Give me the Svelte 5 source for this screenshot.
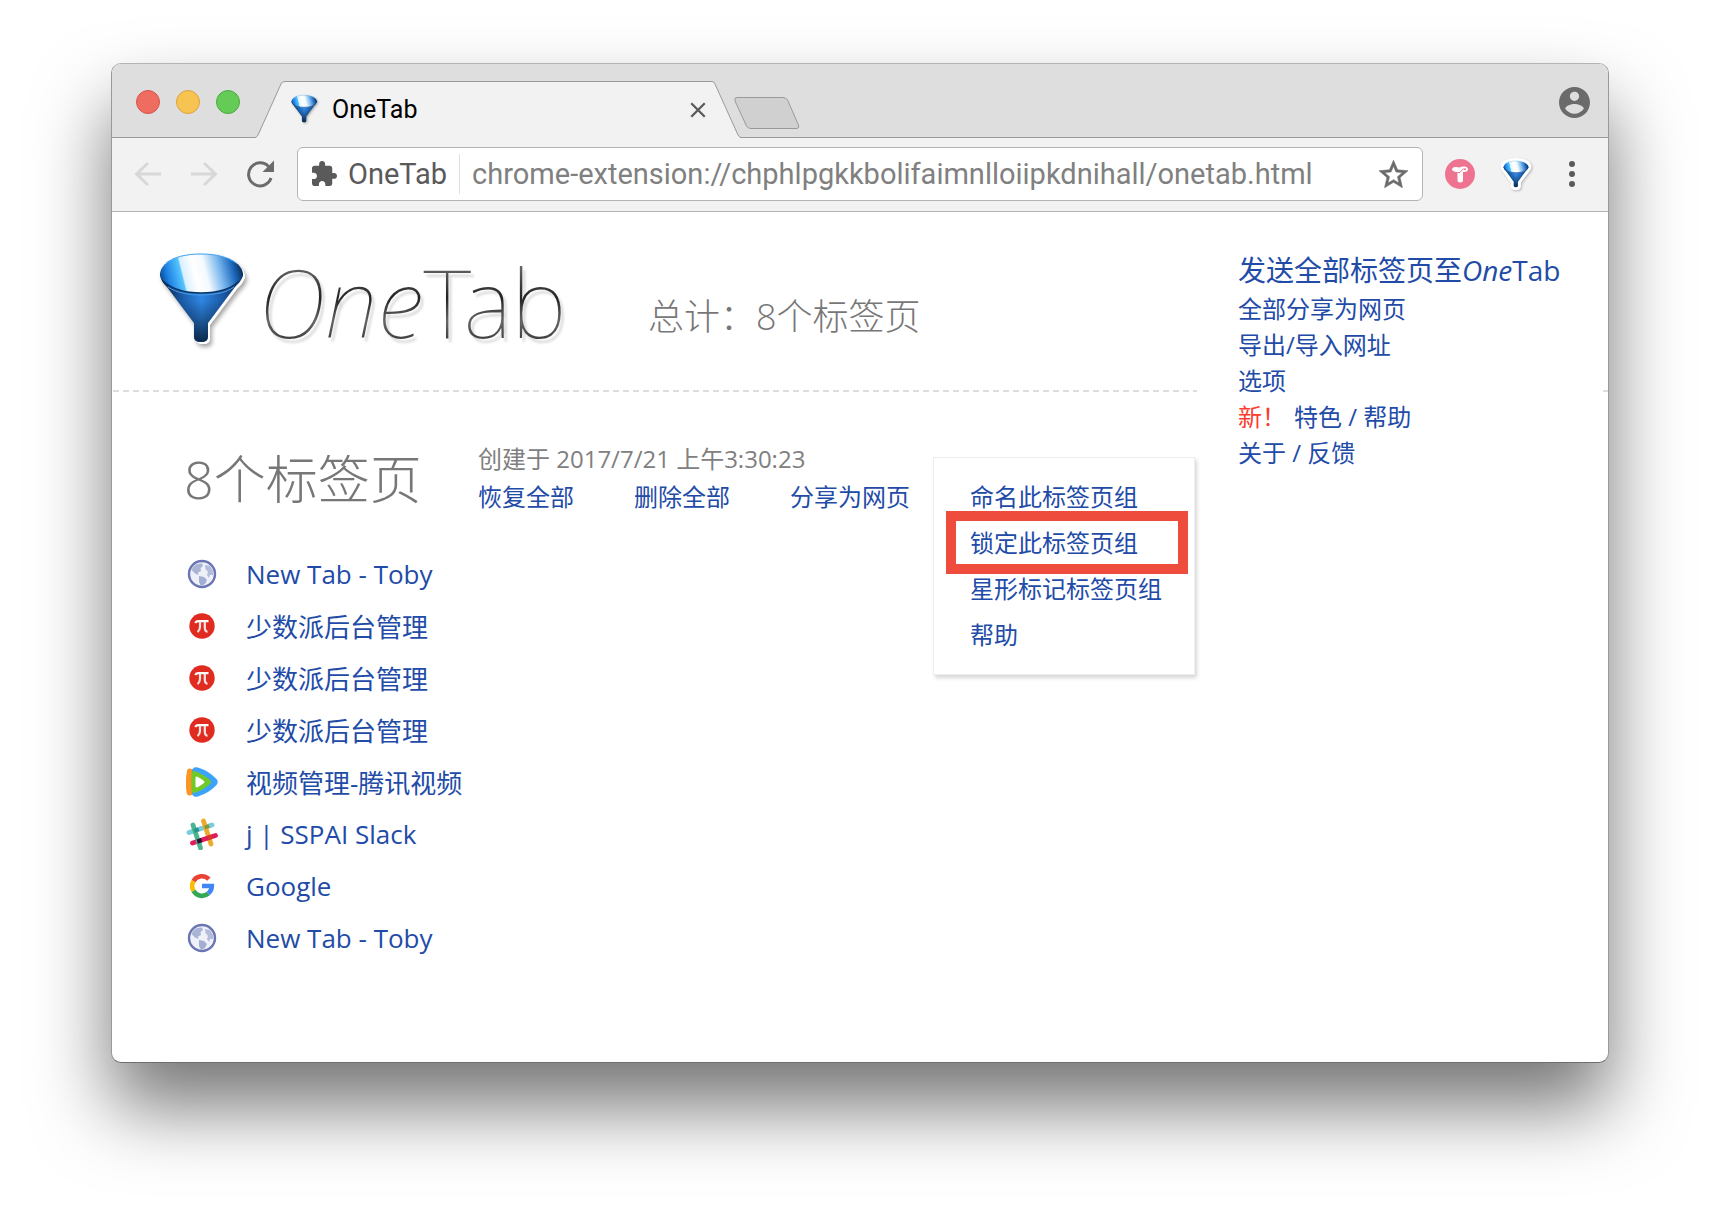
<script lang="ts">
  type Favicon = "globe" | "pi" | "video" | "slack" | "google";

  const tabs: { title: string; icon: Favicon }[] = [
    { title: "New Tab - Toby", icon: "globe" },
    { title: "少数派后台管理", icon: "pi" },
    { title: "少数派后台管理", icon: "pi" },
    { title: "少数派后台管理", icon: "pi" },
    { title: "视频管理-腾讯视频", icon: "video" },
    { title: "j | SSPAI Slack", icon: "slack" },
    { title: "Google", icon: "google" },
    { title: "New Tab - Toby", icon: "globe" },
  ];

  const groupActions = ["恢复全部", "删除全部", "分享为网页"];
  const menu = ["命名此标签页组", "锁定此标签页组", "星形标记标签页组", "帮助"];
  const highlighted = 1;

  let address = $state("chrome-extension://chphlpgkkbolifaimnlloiipkdnihall/onetab.html");
</script>

{#snippet funnel(id: string)}
  <defs>
    <linearGradient id="{id}-in" gradientUnits="userSpaceOnUse" x1="2" y1="28" x2="82" y2="8">
      <stop offset="0" stop-color="#0a4a94" />
      <stop offset="0.1" stop-color="#1f84e4" />
      <stop offset="0.26" stop-color="#55c4ff" />
      <stop offset="0.28" stop-color="#d8f0fe" />
      <stop offset="0.42" stop-color="#ffffff" />
      <stop offset="0.55" stop-color="#f4fafe" />
      <stop offset="0.72" stop-color="#7db9ef" />
      <stop offset="0.88" stop-color="#1c69bd" />
      <stop offset="1" stop-color="#06264a" />
    </linearGradient>
    <linearGradient id="{id}-out" x1="0" x2="1" y1="0" y2="0">
      <stop offset="0.05" stop-color="#06264a" />
      <stop offset="0.28" stop-color="#1c5fae" />
      <stop offset="0.5" stop-color="#2f86e2" />
      <stop offset="0.75" stop-color="#1b5ba6" />
      <stop offset="1" stop-color="#08264a" />
    </linearGradient>
    <linearGradient id="{id}-shade" x1="0" x2="0" y1="0" y2="1">
      <stop offset="0.4" stop-color="#041830" stop-opacity="0" />
      <stop offset="1" stop-color="#041830" stop-opacity="0.85" />
    </linearGradient>
  </defs>
  <path d="M1 20C1 26 4 30 8 34L35 70V84Q35 89 42 89T49 84V70L76 34C80 30 84 26 84 20Z" fill="url(#{id}-out)" />
  <path d="M1 20C1 26 4 30 8 34L35 70V84Q35 89 42 89T49 84V70L76 34C80 30 84 26 84 20Z" fill="url(#{id}-shade)" />
  <path d="M1 22C1 9 19 1 42 1S84 9 84 22C80 34 64 40 42 40S5 34 1 22Z" fill="url(#{id}-in)" />
  <path d="M4 28C14 37 26 40 42 40S71 37 80 28" fill="none" stroke="#0a3568" stroke-width="1.5" />
  <path d="M9 34C18 40 30 42 42 42S67 40 75 34" fill="none" stroke="#4a9eea" stroke-width="1" />
  <path d="M7 10C15 4 27 1 42 1S69 4 77 10" fill="none" stroke="#3aa0f0" stroke-width="1" />
{/snippet}

{#snippet favicon(name: Favicon)}
  <svg class="favicon" viewBox="0 0 32 32" aria-hidden="true">
    {#if name === "globe"}
      <circle cx="16" cy="16" r="13" fill="#eef1f7" stroke="#6a75b3" stroke-width="2.4" />
      <path d="M7 9L11 6L16 5.500L17 8L14.500 10L15 13L12 14.500L12.500 17L9 15.500L5.500 12Z" fill="#aab4d4" />
      <path d="M19 7L24 8L27 13L27 17L24 17L23 20L21 17L22 14L19.500 11Z" fill="#b3bcda" />
      <path d="M13 18L18 19L21 22L19 26L15 28L13 24Z" fill="#a3aed2" />
    {:else if name === "pi"}
      <circle cx="16" cy="16" r="12.700" fill="#df2b20" />
      <path d="M9.500 13.200Q9.800 11.200 12.500 11.200H22.500" fill="none" stroke="#fff" stroke-width="2.200" />
      <path d="M14 11.500V17Q13.800 20.500 11.500 22M18.800 11.500V18Q19 21.500 21.500 21.800" fill="none" stroke="#fbe3e1" stroke-width="2.200" />
    {:else if name === "video"}
      <path d="M1 5Q1 2 4 2.500L9 4V28L4 29.500Q1 30 0.500 26Q-1 16 1 5Z" fill="#fb9526" />
      <path d="M6 6Q6 0 12 1.500Q23 5 30.500 13Q33 16 30.500 19Q23 27 12 30.500Q6 32 6 26Z" fill="#3ba4fa" />
      <path d="M5.500 8Q6 4 10 5.500Q18 8.500 24 14Q26 16 24 18Q18 23.500 10 26.500Q6 28 5.500 24Q5 16 5.500 8Z" fill="#72c824" />
      <path d="M9.500 12Q9.500 10 11.500 10.700Q15 12.500 18 15Q19 16 18 17Q15 19.500 11.500 21.300Q9.500 22 9.500 20Z" fill="#fff" />
    {:else if name === "slack"}
      <g fill="none" stroke-width="4.800" stroke-linecap="round">
        <path d="M3 14.500L26 7" stroke="#76cddd" />
        <path d="M17.500 3L25 26" stroke="#ecab2e" />
        <path d="M6.500 25L29.500 17.500" stroke="#e01c5a" />
        <path d="M7 7L14.500 30" stroke="#49b690" />
      </g>
      <path d="M7.500 11L12 9.500L13.500 13L9 14.700Z" fill="#2b8f8a" />
      <path d="M18 7.700L22.500 6.300L23.800 9.800L19.300 11.300Z" fill="#84983a" />
      <path d="M10.500 21.500L15 20L16.200 24.300L11.800 25.800Z" fill="#2a1233" />
      <path d="M21 18L25.500 16.500L27 20.500L22.400 22Z" fill="#d8372c" />
    {:else}
      <g fill="none" stroke-width="4.600">
        <path d="M22.900 9.100A9.800 9.800 0 0 0 7.500 11.100" stroke="#ea4335" />
        <path d="M7.500 11.100A9.800 9.800 0 0 0 7.500 20.900" stroke="#fbbc05" />
        <path d="M7.500 20.900A9.800 9.800 0 0 0 22.300 23.500" stroke="#34a853" />
        <path d="M22.300 23.500A9.800 9.800 0 0 0 25.800 16H16" stroke="#4285f4" />
      </g>
    {/if}
  </svg>
{/snippet}

<div class="desktop">
  <div class="window">
    <header class="tabstrip">
      <div class="lights">
        <button class="light red" aria-label="Close window"></button>
        <button class="light yellow" aria-label="Minimize"></button>
        <button class="light green" aria-label="Zoom"></button>
      </div>
      <div class="tab">
        <svg class="tab-shape" viewBox="0 0 486 57" aria-hidden="true">
          <path d="M0 57Q2 56 3 54L26 3Q27 0.500 30 0.500H457Q459 0.500 460 3L483 54Q484 56 486 57Z" fill="#f2f2f2" />
          <path d="M0 56.500Q2 56 3 54L26 3Q27 0.500 30 0.500H457Q459 0.500 460 3L483 54Q484 56 486 56.500" fill="none" stroke="#999" />
        </svg>
        <svg class="tab-icon" viewBox="0 0 90 98" aria-hidden="true">{@render funnel("tab")}</svg>
        <span class="tab-title">OneTab</span>
        <button class="tab-close" aria-label="Close tab">
          <svg viewBox="0 0 16 16"><path d="M2 2L14 14M14 2L2 14" stroke="#5a5a5a" stroke-width="2" /></svg>
        </button>
      </div>
      <button class="new-tab" aria-label="New tab">
        <svg viewBox="0 0 66 32">
          <path d="M3 0.500H49Q52 0.500 53.500 3L64.500 28Q65.500 31 63 31.500H17Q14 31.500 12.500 29L1 4Q0 0.500 3 0.500Z" fill="#d0d0d0" stroke="#999" />
        </svg>
      </button>
      <button class="profile" aria-label="Profile">
        <svg viewBox="2 2 20 20">
          <path fill="#6b6b6b" d="M12 2C6.480 2 2 6.480 2 12s4.480 10 10 10 10-4.480 10-10S17.520 2 12 2zm0 3c1.660 0 3 1.340 3 3s-1.340 3-3 3-3-1.340-3-3 1.340-3 3-3zm0 14.200c-2.500 0-4.710-1.280-6-3.220.03-1.990 4-3.080 6-3.080 1.990 0 5.970 1.090 6 3.080-1.290 1.940-3.500 3.220-6 3.220z" />
        </svg>
      </button>
    </header>

    <div class="toolbar">
      <button class="nav" aria-label="Back">
        <svg viewBox="0 0 28 28"><path d="M14 3L2.500 14L14 25M3 14H27" fill="none" stroke="#d8d8d8" stroke-width="3" /></svg>
      </button>
      <button class="nav" aria-label="Forward">
        <svg viewBox="0 0 28 28"><path d="M14 3L25.500 14L14 25M25 14H1" fill="none" stroke="#d8d8d8" stroke-width="3" /></svg>
      </button>
      <button class="nav" aria-label="Reload">
        <svg viewBox="0 0 28 28">
          <path d="M22.500 6.500A11.500 11.500 0 1 0 25 18" fill="none" stroke="#6b6b6b" stroke-width="3" />
          <path d="M28 0.500V12H16.500Z" fill="#6b6b6b" />
        </svg>
      </button>
      <div class="omnibox">
        <svg class="puzzle" viewBox="2 1 21 21" aria-hidden="true">
          <path fill="#5a5a5a" d="M20.500 11H19V7c0-1.100-.9-2-2-2h-4V3.500C13 2.120 11.880 1 10.500 1S8 2.120 8 3.500V5H4c-1.100 0-1.990.9-1.990 2v3.800H3.500c1.490 0 2.700 1.210 2.700 2.700s-1.210 2.700-2.700 2.700H2V20c0 1.100.9 2 2 2h3.800v-1.500c0-1.490 1.210-2.700 2.700-2.700 1.490 0 2.700 1.210 2.700 2.700V22H17c1.100 0 2-.9 2-2v-4h1.500c1.380 0 2.500-1.120 2.500-2.500S21.880 11 20.500 11z" />
        </svg>
        <span class="origin">OneTab</span>
        <input class="url" type="text" aria-label="Address" bind:value={address} />
        <button class="star" aria-label="Bookmark this page">
          <svg viewBox="2 2 20 19">
            <path fill="#6b6b6b" stroke="#6b6b6b" stroke-width="0.4" d="M22 9.240l-7.190-.62L12 2 9.190 8.630 2 9.240l5.460 4.730L5.820 21 12 17.270 18.180 21l-1.630-7.030L22 9.240zM12 15.400l-3.760 2.270 1-4.280-3.320-2.880 4.380-.38L12 6.100l1.710 4.040 4.380.38-3.320 2.880 1 4.280L12 15.400z" />
          </svg>
        </button>
      </div>
      <button class="ext" aria-label="Toby">
        <svg viewBox="0 0 30 30">
          <circle cx="15" cy="15" r="15" fill="#ee7390" />
          <path d="M7 10Q8 7.500 11 8L15 8.500Q17 7 20 7.500Q23 8 23 10.500Q22.500 13 19 13H12Q7 12.500 7 10Z" fill="#fff" />
          <path d="M12.500 13H18V21Q18 23.500 15.300 23.500T12.500 21Z" fill="#fff" />
          <path d="M12.500 13.500H15L18.500 9.500" fill="none" stroke="#ee7390" />
          <circle cx="20" cy="10.200" r="1" fill="#ee7390" />
        </svg>
      </button>
      <button class="ext funnel-ext" aria-label="OneTab">
        <svg viewBox="-9 -9 103 107">
          <path d="M1 20C1 9 19 1 42 1S84 9 84 20Q84 26 76 34L49 70V84Q49 89 42 89T35 84V70L8 34Q1 26 1 20Z" fill="#fff" stroke="#fff" stroke-width="20" stroke-linejoin="round" />
          {@render funnel("ext")}
        </svg>
      </button>
      <button class="ext dots" aria-label="Menu">
        <svg viewBox="0 0 6 26" fill="#5a5a5a">
          <circle cx="3" cy="3" r="3" /><circle cx="3" cy="13" r="3" /><circle cx="3" cy="23" r="3" />
        </svg>
      </button>
    </div>

    <main class="page">
      <div class="left">
        <div class="banner">
          <svg class="logo-icon" viewBox="0 0 90 98" aria-hidden="true">{@render funnel("logo")}</svg>
          <h1 class="logo"><em>One</em>Tab</h1>
          <p class="total">总计：8个标签页</p>
        </div>

        <section class="group">
          <div class="group-head">
            <h2>8个标签页</h2>
            <div class="meta">
              <p class="created">创建于 2017/7/21 上午3:30:23</p>
              <div class="actions">
                {#each groupActions as action}
                  <a href="#top">{action}</a>
                {/each}
              </div>
            </div>
            <ul class="menu">
              {#each menu as item, i}
                <li class:highlighted={i === highlighted}><a href="#top">{item}</a></li>
              {/each}
            </ul>
          </div>

          <ul class="tabs">
            {#each tabs as tab}
              <li>
                {@render favicon(tab.icon)}
                <a href="#top">{tab.title}</a>
              </li>
            {/each}
          </ul>
        </section>
      </div>

      <nav class="side">
        <a class="primary" href="#top">发送全部标签页至<em>One</em>Tab</a>
        <a href="#top">全部分享为网页</a>
        <a href="#top">导出/导入网址</a>
        <a href="#top">选项</a>
        <a href="#top"><span class="new">新！</span>特色 / 帮助</a>
        <a href="#top">关于 / 反馈</a>
      </nav>
    </main>
  </div>
</div>

<style>
  :global(body) {
    background: #fff;
  }

  .desktop {
    box-sizing: border-box;
    min-height: 100vh;
    padding: 63px 111px 160px;
    overflow: hidden;
    font-family: "Open Sans", "Noto Sans CJK SC", sans-serif;
  }

  .window {
    display: flex;
    flex-direction: column;
    min-height: 998px;
    border: 1px solid #999;
    border-top-color: #b4b4b4;
    border-bottom-color: #6e6e6e;
    border-radius: 10px;
    background: #fff;
    box-shadow: 0 44px 76px rgba(0, 0, 0, 0.54);
    overflow: hidden;
  }

  button {
    display: flex;
    align-items: center;
    justify-content: center;
    padding: 0;
    border: 0;
    background: none;
  }

  svg {
    display: block;
  }

  h1,
  h2,
  p,
  ul {
    margin: 0;
    padding: 0;
    font-weight: 300;
    list-style: none;
  }

  a {
    color: #224ba8;
    text-decoration: none;
  }

  /* browser chrome */

  .tabstrip {
    display: flex;
    align-items: flex-end;
    height: 74px;
    background: #dedede;
    box-shadow: inset 0 -1px #999;
    font-family: Roboto, sans-serif;
  }

  .lights {
    display: flex;
    align-self: center;
    gap: 16px;
    padding: 2px 15px 0 24px;
  }

  .light {
    box-sizing: border-box;
    width: 24px;
    height: 24px;
    border: 1px solid #d9544b;
    border-radius: 50%;
    background: #ef6c60;
  }

  .yellow {
    border-color: #dda23f;
    background: #f7c351;
  }

  .green {
    border-color: #4eaa3f;
    background: #63cb56;
  }

  .tab {
    position: relative;
    display: flex;
    align-items: center;
    box-sizing: border-box;
    width: 486px;
    height: 57px;
    padding: 0 34px 0 36px;
  }

  .tab-shape {
    position: absolute;
    inset: 0;
    width: 100%;
    height: 100%;
  }

  .tab-icon,
  .tab-title,
  .tab-close {
    position: relative;
  }

  .tab-icon {
    width: 28px;
    height: 30px;
    filter: drop-shadow(1px 1px 1px rgba(0, 0, 0, 0.3));
  }

  .tab-title {
    flex: 1;
    padding-left: 13px;
    font-size: 25px;
  }

  .tab-close svg {
    width: 18px;
    height: 18px;
  }

  .new-tab {
    padding-bottom: 9px;
    margin-left: -7px;
  }

  .new-tab svg {
    width: 66px;
    height: 32px;
  }

  .profile {
    align-self: center;
    margin: 0 18px 0 auto;
    padding-top: 2px;
  }

  .profile svg {
    width: 31px;
    height: 31px;
  }

  .toolbar {
    display: flex;
    align-items: center;
    box-sizing: border-box;
    height: 74px;
    padding: 0 33px 2px 22px;
    border-bottom: 1px solid #b4b4b4;
    background: #f2f2f2;
    font-family: Roboto, sans-serif;
  }

  .nav {
    margin-right: 28px;
  }

  .nav svg {
    width: 28px;
    height: 28px;
  }

  .omnibox {
    display: flex;
    flex: 1;
    align-items: center;
    box-sizing: border-box;
    height: 54px;
    margin-right: 22px;
    margin-left: -5px;
    padding: 0 14px;
    border: 1px solid #b4b4b4;
    border-radius: 6px;
    background: #fff;
    font-size: 29px;
  }

  .puzzle {
    width: 25px;
    height: 25px;
  }

  .origin {
    padding: 3px 12px 3px 11px;
    border-right: 1px solid #e0e0e0;
    color: #5a5a5a;
  }

  .url {
    flex: 1;
    min-width: 0;
    padding: 0 0 0 12px;
    border: 0;
    outline: 0;
    background: none;
    color: #808080;
    font: inherit;
  }

  .star svg {
    width: 29px;
    height: 28px;
  }

  .ext {
    margin-right: 25px;
  }

  .ext svg {
    width: 30px;
    height: 30px;
  }

  .ext.funnel-ext {
    margin-right: 37px;
    filter: drop-shadow(1px 1px 1px rgba(0, 0, 0, 0.25));
  }

  .ext.funnel-ext svg {
    width: 32px;
    height: 32px;
  }

  .ext.dots {
    margin-right: 0;
  }

  .ext.dots svg {
    width: 6px;
    height: 26px;
  }

  /* page */

  .page {
    display: flex;
    flex: 1;
    align-items: flex-start;
    background: linear-gradient(90deg, #ddd 60%, transparent 0) 1px 178px / 10px 2px repeat-x;
  }

  .left {
    position: relative;
    z-index: 1;
    flex: 1;
  }

  .banner {
    display: flex;
    height: 180px;
  }

  .logo-icon {
    width: 90px;
    height: 98px;
    margin: 41px 0 0 47px;
    filter: drop-shadow(2px 2px 0 #fff) drop-shadow(2px 3px 2px rgba(0, 0, 0, 0.35));
  }

  .logo {
    width: 320px;
    margin: 23px 0 0 9px;
    background: linear-gradient(180deg, #666 20%, #222 40%, #666 55%, #111 80%);
    background-clip: text;
    color: transparent;
    font-family: "Noto Sans", "Open Sans", sans-serif;
    font-size: 94px;
    font-weight: 100;
    line-height: 134px;
    white-space: nowrap;
    filter: drop-shadow(3px 4px 1px rgba(0, 0, 0, 0.15));
  }

  .total {
    margin: 80px 0 0 70px;
    color: #777;
    font-size: 36px;
    line-height: 50px;
  }

  .group {
    padding: 48px 0 0 72px;
  }

  .group-head {
    display: flex;
    align-items: flex-start;
    height: 108px;
  }

  h2 {
    width: 294px;
    color: #777;
    font-size: 52px;
    line-height: 78px;
  }

  .meta {
    flex: 1;
    font-size: 24px;
    line-height: 38px;
  }

  .created {
    color: #808080;
    font-weight: 400;
  }

  .actions {
    display: flex;
    gap: 60px;
  }

  .menu {
    box-sizing: border-box;
    width: 262px;
    margin: 17px 2px 0 0;
    padding: 16px 12px;
    border: 1px solid #eee;
    background: #fff;
    box-shadow: 2px 3px 4px rgba(0, 0, 0, 0.16);
    font-size: 24px;
    line-height: 46px;
  }

  .menu li {
    padding-left: 24px;
    font-weight: 400;
  }

  .menu .highlighted {
    margin: -9px -6px -8px 0;
    padding: 9px 0 8px 24px;
    box-shadow: inset 0 0 0 10px #ee4d3d;
  }

  .tabs {
    margin-left: 2px;
  }

  .tabs li {
    display: flex;
    align-items: center;
    gap: 28px;
    height: 52px;
    font-size: 26px;
    font-weight: 400;
  }

  .favicon {
    width: 32px;
    height: 32px;
  }

  .side {
    display: flex;
    flex-direction: column;
    box-sizing: border-box;
    width: 403px;
    margin-right: 8px;
    padding: 37px 0 20px 41px;
    background: #fff;
    font-size: 24px;
    line-height: 36px;
  }

  .side .primary {
    font-size: 28px;
    line-height: 42px;
  }

  .new {
    margin-right: 8px;
    color: #fc3b2d;
  }
</style>
